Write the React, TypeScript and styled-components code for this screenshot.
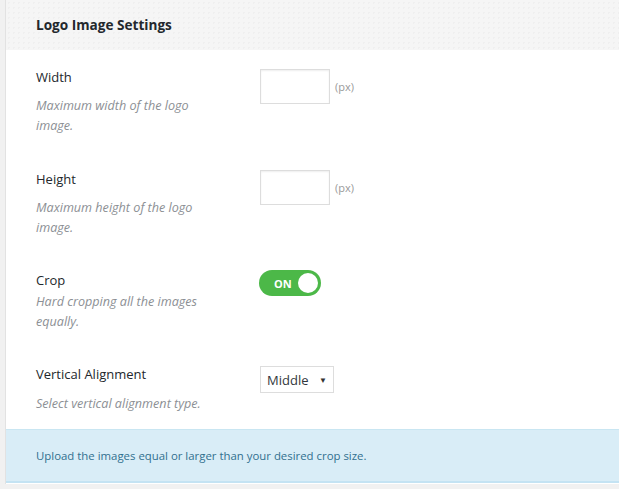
import React from "react";
import styled, { createGlobalStyle } from "styled-components";

const Global = createGlobalStyle`
  html, body { margin: 0; padding: 0; background: #f1f1f1; }
  body { font-family: "Open Sans", "Noto Sans", sans-serif; color: #23282d; overflow: hidden; }
  * { box-sizing: border-box; }
`;

const Panel = styled.div`
  margin-left: 5px;
  border-left: 1px solid #e2e2e2;
  background: #fff;
  height: 484px;
  display: flex;
  flex-direction: column;
  & > * { flex-shrink: 0; }
`;

const Header = styled.div`
  height: 50px;
  display: flex;
  align-items: center;
  padding-left: 30px;
  background-color: #f5f5f5;
  background-image: radial-gradient(rgba(0, 0, 0, 0.025) 1px, transparent 1px);
  background-size: 5px 5px;
`;

const Title = styled.h2`
  margin: 0;
  font-size: 13.6px;
  font-weight: 700;
  color: #23282d;
  line-height: 20px;
`;

const Rows = styled.div`
  display: flex;
  flex-direction: column;
  margin-bottom: -1px;
`;

const Row = styled.div<{ $top: number }>`
  display: grid;
  grid-template-columns: 224px 1fr;
  padding: ${(p) => p.$top}px 0 16px 30px;
`;

const LabelCol = styled.div<{ $gap: number }>`
  display: flex;
  flex-direction: column;
  gap: ${(p) => p.$gap}px;
`;

const Label = styled.div`
  font-size: 13px;
  line-height: 20px;
  color: #23282d;
`;

const Desc = styled.div`
  font-size: 12.6px;
  line-height: 20px;
  font-style: italic;
  color: #8c8f94;
  max-width: 180px;
`;

const Field = styled.div<{ $offset: number }>`
  display: flex;
  align-items: center;
  align-self: start;
  gap: 5px;
  margin-top: ${(p) => p.$offset}px;
`;

const NumberBox = styled.input`
  width: 70px;
  height: 35px;
  border: 1px solid #ddd;
  box-shadow: inset 0 1px 2px rgba(0, 0, 0, 0.07);
  background: #fff;
  padding: 0 6px;
  font-family: inherit;
  outline: none;
`;

const Unit = styled.span`
  font-size: 11px;
  color: #9a9a9a;
`;

const Toggle = styled.div`
  width: 62px;
  height: 26px;
  border-radius: 13px;
  background: #4cb848;
  display: flex;
  align-items: center;
  justify-content: space-between;
  padding: 0 3px 0 15px;
  margin-left: -1px;
`;

const ToggleText = styled.span`
  color: #fff;
  font-size: 11px;
  font-weight: 700;
`;

const Knob = styled.span`
  width: 20px;
  height: 20px;
  border-radius: 50%;
  background: #fff;
`;

const Select = styled.div`
  width: 74px;
  height: 27px;
  border: 1px solid #ddd;
  background: #fff;
  display: flex;
  align-items: center;
  justify-content: space-between;
  padding: 0 6px 0 6px;
  font-size: 13px;
  color: #32373c;
`;

const Arrow = styled.span`
  font-size: 8px;
  color: #333;
`;

const Notice = styled.div`
  height: 54px;
  background: #d9edf7;
  border-top: 1px solid #c9e6f2;
  border-bottom: 2px solid #c4e3f3;
  display: flex;
  align-items: center;
  padding: 0 0 0 30px;
  font-size: 11.4px;
  color: #31708f;
`;

export default function App() {
  return (
    <>
      <Global />
      <Panel>
        <Header>
          <Title>Logo Image Settings</Title>
        </Header>
        <Rows>
          <Row $top={17}>
            <LabelCol $gap={9}>
              <Label>Width</Label>
              <Desc>Maximum width of the logo image.</Desc>
            </LabelCol>
            <Field $offset={2}>
              <NumberBox type="text" />
              <Unit>(px)</Unit>
            </Field>
          </Row>
          <Row $top={17}>
            <LabelCol $gap={9}>
              <Label>Height</Label>
              <Desc>Maximum height of the logo image.</Desc>
            </LabelCol>
            <Field $offset={1}>
              <NumberBox type="text" />
              <Unit>(px)</Unit>
            </Field>
          </Row>
          <Row $top={16}>
            <LabelCol $gap={2}>
              <Label>Crop</Label>
              <Desc>Hard cropping all the images equally.</Desc>
            </LabelCol>
            <Field $offset={0}>
              <Toggle>
                <ToggleText>ON</ToggleText>
                <Knob />
              </Toggle>
            </Field>
          </Row>
          <Row $top={16}>
            <LabelCol $gap={10}>
              <Label>Vertical Alignment</Label>
              <Desc>Select vertical alignment type.</Desc>
            </LabelCol>
            <Field $offset={2}>
              <Select>
                <span>Middle</span>
                <Arrow>▼</Arrow>
              </Select>
            </Field>
          </Row>
        </Rows>
        <Notice>Upload the images equal or larger than your desired crop size.</Notice>
      </Panel>
    </>
  );
}
